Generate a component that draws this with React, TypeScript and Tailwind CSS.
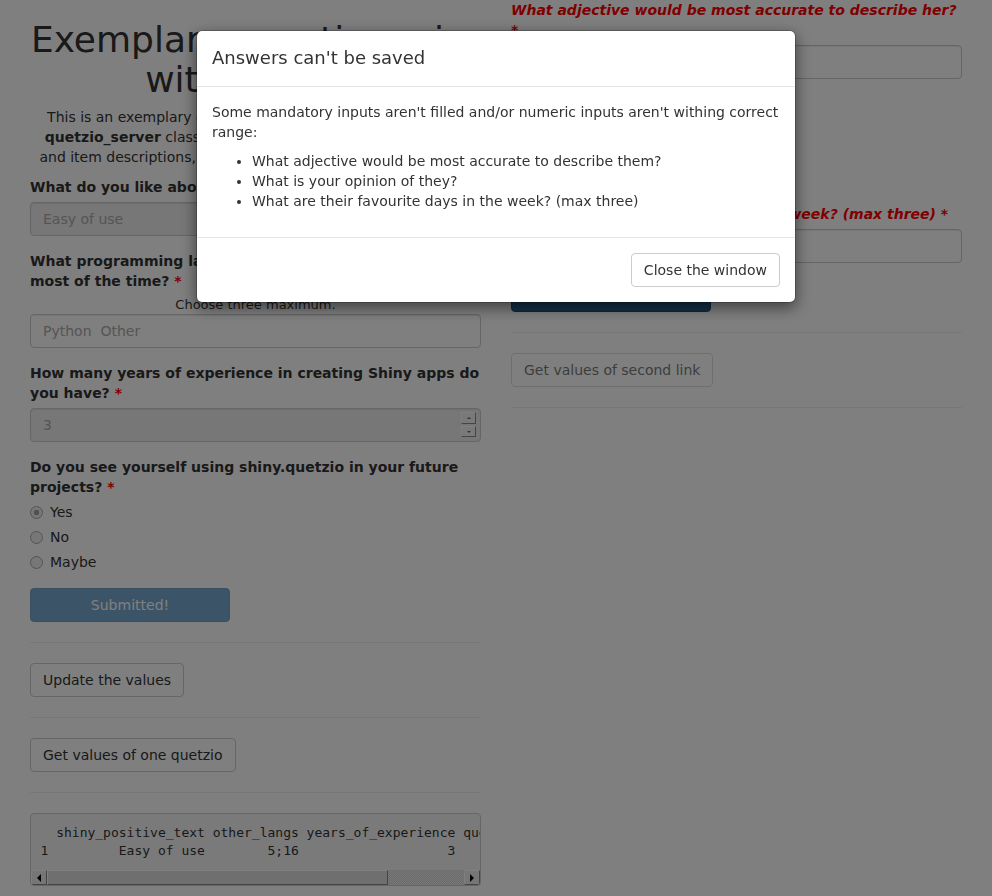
import React from "react";

const control =
  "block w-full h-[34px] px-3 py-1.5 text-sm leading-5 border border-[#ccc] rounded shadow-[inset_0_1px_1px_rgba(0,0,0,0.075)]";
const btnDefault =
  "h-[34px] px-3 border border-[#ccc] rounded bg-white text-[#333] text-sm leading-5";
const bevel = "border border-t-white border-l-white border-r-[#8a8a8a] border-b-[#8a8a8a]";

function Req() {
  return <span className="text-[#ff0000]">*</span>;
}

function Radio({ label, checked }: { label: string; checked?: boolean }) {
  return (
    <label className="flex items-center h-5 gap-[7px] font-normal">
      <input
        type="radio"
        disabled
        defaultChecked={checked}
        className="m-0 w-[13px] h-[13px] appearance-none rounded-full border border-[#a8a8a8] bg-[#eeeeee] checked:bg-[radial-gradient(circle,#a0a0a0_0_2.5px,#eeeeee_3px)]"
      />
      {label}
    </label>
  );
}

const tableText = [
  "  shiny_positive_text other_langs years_of_experience quetzio_future",
  "1         Easy of use        5;16                   3            Yes",
].join("\n");

export default function App() {
  return (
    <div className="relative h-[896px] overflow-hidden bg-white text-[#333] text-sm leading-5 font-['DejaVu_Sans',sans-serif]">
      <div className="flex px-[15px]">
        {/* left column */}
        <div className="w-1/2 px-[15px]">
          <h1 className="-mx-[4px] mt-5 mb-2 text-center text-[36px] leading-[1.1] font-normal">
            Exemplary questionnaire with quetzio
          </h1>
          <p className="mb-[10px] text-center">
            This is an exemplary questionnaire created with the help of
            <br />
            <b>quetzio_server</b> class with the custom labels, placeholders,
            <br />
            and item descriptions, which may be loaded from a YAML file.
          </p>

          <div className="mb-[15px]">
            <label className="block mb-[5px] font-bold">
              What do you like about shiny.quetzio? <Req />
            </label>
            <input disabled readOnly value="Easy of use" className={`${control} bg-[#eee] text-[#aaa]`} />
          </div>

          <div className="mb-[15px]">
            <label className="block mb-[5px] font-bold">
              What programming languages other than R do you use most of the time? <Req />
            </label>
            <div className="text-center text-[13px] leading-[18px]">Choose three maximum.</div>
            <input
              disabled
              readOnly
              value="Python  Other"
              className={`${control} bg-white text-[#aaa] whitespace-pre`}
            />
          </div>

          <div className="mb-[15px]">
            <label className="block mb-[5px] font-bold">
              How many years of experience in creating Shiny apps do you have? <Req />
            </label>
            <div className="relative">
              <input disabled readOnly value="3" className={`${control} bg-[#eee] text-[#aaa]`} />
              <div className="absolute right-[5px] top-[4px] flex flex-col gap-[2px]">
                <span className={`flex items-center justify-center w-[15px] h-[12px] bg-[#f3f3f3] ${bevel}`}>
                  <span className="w-0 h-0 border-x-[2px] border-x-transparent border-b-[2px] border-b-[#666]" />
                </span>
                <span className={`flex items-center justify-center w-[15px] h-[11px] bg-[#f3f3f3] ${bevel}`}>
                  <span className="w-0 h-0 border-x-[2px] border-x-transparent border-t-[2px] border-t-[#666]" />
                </span>
              </div>
            </div>
          </div>

          <div>
            <label className="block mb-[5px] font-bold">
              Do you see yourself using shiny.quetzio in your future projects? <Req />
            </label>
            <div className="flex flex-col gap-[5px]">
              <Radio label="Yes" checked />
              <Radio label="No" />
              <Radio label="Maybe" />
            </div>
          </div>

          <button
            disabled
            className="mt-[16px] w-[200px] h-[34px] rounded bg-[#337ab7] border border-[#2e6da4] text-white opacity-65"
          >
            Submitted!
          </button>

          <hr className="my-5 border-[#eee]" />
          <button className={btnDefault}>Update the values</button>
          <hr className="my-5 border-[#eee]" />
          <button className={btnDefault}>Get values of one quetzio</button>
          <hr className="my-5 border-[#eee]" />

          <div className="mb-[10px] bg-[#f5f5f5] border border-[#ccc] rounded overflow-hidden">
            <pre className="p-[9.5px] text-[13px] leading-[1.42857] font-['DejaVu_Sans_Mono',monospace] whitespace-pre overflow-hidden text-[#333]">
              {tableText}
            </pre>
            {/* horizontal scrollbar */}
            <div className="flex h-[15px]">
              <span className={`flex items-center justify-center w-[16px] bg-[#ececec] ${bevel}`}>
                <span className="w-0 h-0 border-y-[4px] border-y-transparent border-r-[4px] border-r-black" />
              </span>
              <span className={`w-[341px] bg-[#dedede] ${bevel}`} />
              <span className="flex-1 bg-[repeating-conic-gradient(#d4d4d4_0_25%,#f2f2f2_0_50%)] bg-[length:2px_2px]" />
              <span className={`flex items-center justify-center w-[16px] bg-[#ececec] ${bevel}`}>
                <span className="w-0 h-0 border-y-[4px] border-y-transparent border-l-[4px] border-l-black" />
              </span>
            </div>
          </div>
        </div>

        {/* right column */}
        <div className="w-1/2 px-[15px]">
          <div className="mb-[15px]">
            <label className="block mb-[5px] font-bold italic text-[#ff0000]">
              What adjective would be most accurate to describe her? *
            </label>
            <input readOnly value="" className={`${control} bg-white`} />
          </div>

          <div className="mb-[15px]">
            <label className="block mb-[5px] font-bold">
              What is your opinion of her? <Req />
            </label>
            <div className="flex flex-col gap-[5px]">
              <Radio label="Positive" />
              <Radio label="Neutral" />
              <Radio label="Negative" />
            </div>
          </div>

          <div className="mb-[15px]">
            <label className="block mb-[5px] font-bold italic text-[#ff0000]">
              What are her favourite days in the week? (max three) *
            </label>
            <input readOnly value="" className={`${control} bg-white`} />
          </div>

          <button className="w-[200px] h-[34px] rounded bg-[#286090] border border-[#204d74] text-white">
            Submit
          </button>

          <hr className="my-5 border-[#eee]" />
          <button disabled className={`${btnDefault} opacity-65`}>
            Get values of second link
          </button>
          <hr className="my-5 border-[#eee]" />
        </div>
      </div>

      {/* modal backdrop */}
      <div className="fixed inset-0 bg-black/50" />

      <div className="fixed inset-0 overflow-y-auto">
        <div className="w-[600px] mx-auto mt-[30px] bg-white bg-clip-padding border border-black/20 rounded-md shadow-[0_5px_15px_rgba(0,0,0,0.5)]">
          <div className="px-[15px] pt-[14px] pb-[16px] border-b border-[#e5e5e5]">
            <h4 className="text-[18px] leading-[25px] font-normal">Answers can't be saved</h4>
          </div>
          <div className="p-[15px]">
            <p className="mb-[9px]">
              Some mandatory inputs aren't filled and/or numeric inputs aren't withing correct range:
            </p>
            <ul className="list-disc pl-10 mb-[11px]">
              <li>What adjective would be most accurate to describe them?</li>
              <li>What is your opinion of they?</li>
              <li>What are their favourite days in the week? (max three)</li>
            </ul>
          </div>
          <div className="p-[15px] border-t border-[#e5e5e5] text-right">
            <button className={btnDefault}>Close the window</button>
          </div>
        </div>
      </div>
    </div>
  );
}
